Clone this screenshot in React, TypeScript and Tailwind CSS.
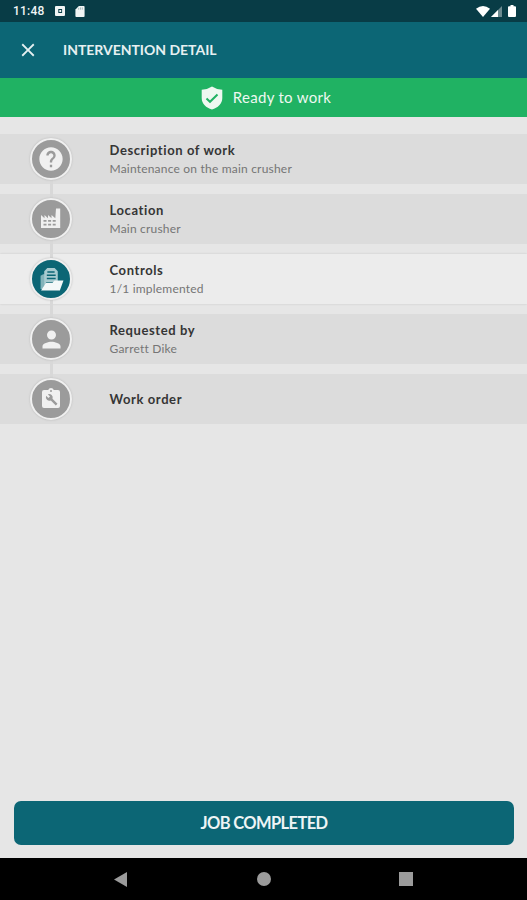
import type { ReactNode } from 'react'
import { MdClose, MdHelp, MdPerson } from 'react-icons/md'

interface Step {
  title: string
  detail?: string
  icon: ReactNode
  active?: boolean
}

function ShieldIcon() {
  return (
    <svg viewBox="0 0 22 24" className="h-6 w-[22px]">
      <path
        d="M11 .5Q15 3.300 21.300 3.800V12c0 6-4.500 9.800-10.300 11.500C5.200 21.800.7 18 .7 12V3.800Q7 3.300 11 .5z"
        fill="currentColor"
      />
      <path d="m5.500 12.500 3.500 3.300 7.500-7.300" fill="none" stroke="#20b263" strokeWidth="2" />
    </svg>
  )
}

function FactoryIcon() {
  return (
    <svg viewBox="0 0 22 22" className="mb-0.5 h-[22px] w-[22px]" fill="currentColor">
      <path
        fillRule="evenodd"
        d="M1 21V8l3.500 3.200V8L8 11.200V8l3.500 3.200V8l3.800 3.200L16 1.500h4.200V21zM3.500 13v1.800h3V13zm4.600 0v1.800h3V13zm4.600 0v1.800h3V13zM3.500 16.800v1.800h3v-1.800zm4.600 0v1.800h3v-1.800zm4.600 0v1.800h3v-1.800z"
      />
    </svg>
  )
}

function FolderIcon() {
  return (
    <svg viewBox="0 0 24 24" className="h-[25px] w-[25px] shrink-0">
      <path d="M1.500 21V8.500L4 7h2v8L3.500 21z" fill="#83b3ba" />
      <path d="M5 15V4l3-3h7l3 3v10.500H7L5 18z" fill="#a9cbd0" />
      <path d="M8 4.800h7M7.500 8h8.500M7.500 11h8.500" stroke="#0c6675" strokeWidth="1.500" />
      <path d="M6.500 15H13l2-2h8.500L20 22.500H2z" fill="#f4f8f8" />
    </svg>
  )
}

function WorkOrderIcon() {
  return (
    <svg viewBox="0 0 24 24" className="h-6 w-6 shrink-0">
      <path
        fill="currentColor"
        fillRule="evenodd"
        d="M5 3h4.200a3 3 0 0 1 5.600 0H19a2 2 0 0 1 2 2v14a2 2 0 0 1-2 2H5a2 2 0 0 1-2-2V5a2 2 0 0 1 2-2zm7 0a1 1 0 1 0 0 2 1 1 0 0 0 0-2z"
      />
      <path
        fill="#9b9b9b"
        d="m18.500 16.800-5-5a3.600 3.600 0 0 0-4.700-4.600l2.200 2.200-1.600 1.600-2.300-2.200a3.600 3.600 0 0 0 4.700 4.600l5 5z"
      />
    </svg>
  )
}

const steps: Step[] = [
  {
    title: 'Description of work',
    detail: 'Maintenance on the main crusher',
    icon: <MdHelp className="h-7 w-7" />,
  },
  { title: 'Location', detail: 'Main crusher', icon: <FactoryIcon /> },
  {
    title: 'Controls',
    detail: '1/1 implemented',
    icon: <FolderIcon />,
    active: true,
  },
  {
    title: 'Requested by',
    detail: 'Garrett Dike',
    icon: <MdPerson className="h-[27px] w-[27px]" />,
  },
  { title: 'Work order', icon: <WorkOrderIcon /> },
]

function StatusBar() {
  return (
    <div className="flex h-[22px] items-center bg-[#083c46] pl-[13px] pr-[11px] text-[#f1f5f5]">
      <span className="w-[42px] font-[Roboto,sans-serif] text-[12px] font-medium tracking-[0.2px]">
        11:48
      </span>
      <svg viewBox="0 0 10 10" className="h-2.5 w-2.5" fill="currentColor">
        <path
          fillRule="evenodd"
          d="M1 0h8a1 1 0 0 1 1 1v8a1 1 0 0 1-1 1H1a1 1 0 0 1-1-1V1a1 1 0 0 1 1-1zm2.300 3v4h3.800V3z"
        />
        <path d="M4.300 4h1.900v2H4.300z" />
      </svg>
      <svg viewBox="0 0 10 12" className="ml-[10px] h-[11px] w-2.5" fill="currentColor">
        <path d="M3.800 0H9a1 1 0 0 1 1 1v10a1 1 0 0 1-1 1H1a1 1 0 0 1-1-1V3.800z" />
        <path d="M3.500 2v2M5.500 1.500V4M7.500 1.500V4" stroke="#7d999e" strokeWidth=".7" />
      </svg>
      <svg viewBox="0 0 14 11" className="ml-auto h-[11px] w-3.5" fill="#fff">
        <path d="M0 2.800Q7-2.600 14 2.800L7 11z" />
      </svg>
      <svg viewBox="0 0 11 11" className="ml-[1px] h-[11px] w-[11px]">
        <path d="M0 11 11 0v11z" fill="#6b8a90" />
        <path d="M0 11 7 4v7z" fill="#fff" />
      </svg>
      <svg viewBox="0 0 8 12" className="ml-[6px] h-3 w-2" fill="#fff">
        <path d="M2.500 0h3v1.300H7a1 1 0 0 1 1 1V11a1 1 0 0 1-1 1H1a1 1 0 0 1-1-1V2.300a1 1 0 0 1 1-1h1.500z" />
      </svg>
    </div>
  )
}

function StepRow({ step, last }: { step: Step; last: boolean }) {
  return (
    <div
      className={`relative flex h-[50px] items-center pl-[30px] ${
        step.active
          ? 'bg-[#ececec] shadow-[0_0_2px_#c8c8c8]'
          : 'bg-[#dcdcdc]'
      }`}
    >
      {!last && (
        <div className="absolute left-[50px] top-[46px] z-10 h-[18px] w-[3px] bg-[#d8d8d8]" />
      )}
      <div
        className={`z-20 flex h-[42px] w-[42px] shrink-0 items-center justify-center rounded-full border-2 border-[#f0f0f0] text-[#f0f0f0] shadow-[0_0_2px_#b4b4b4] ${
          step.active ? 'bg-[#0c6675]' : 'bg-[#9b9b9b]'
        }`}
      >
        {step.icon}
      </div>
      <div className="ml-[37.500px]">
        <p
          className={`text-[13px] font-bold tracking-[0.6px] text-[#353535] ${
            step.detail ? 'pt-px leading-[19px]' : 'leading-[19px]'
          }`}
        >
          {step.title}
        </p>
        {step.detail && (
          <p className="text-[12px] leading-[18px] tracking-[0.2px] text-[#757575]">
            {step.detail}
          </p>
        )}
      </div>
    </div>
  )
}

export default function App() {
  return (
    <div className="flex h-[900px] w-[527px] flex-col overflow-hidden bg-[#e6e6e6] font-[Lato,sans-serif]">
      <StatusBar />
      <header className="flex h-14 items-center bg-[#0c6675] pl-[17px] text-[#e6f0f1]">
        <MdClose className="h-[22px] w-[22px]" />
        <h1 className="ml-6 pb-px text-[14px] font-bold tracking-[-0.02px]">
          INTERVENTION DETAIL
        </h1>
      </header>
      <div className="flex h-[39px] items-center justify-center gap-[10px] bg-[#20b263] pl-[5px] text-[#eef8f1]">
        <ShieldIcon />
        <span className="text-[15px] tracking-[0.3px]">Ready to work</span>
      </div>

      <main className="mt-[17px] flex flex-1 flex-col gap-[10px]">
        {steps.map((step, i) => (
          <StepRow key={step.title} step={step} last={i === steps.length - 1} />
        ))}
      </main>

      <div className="pb-[13px] pl-3.5 pr-[13px]">
        <button className="h-11 w-full rounded-[7px] bg-[#0c6675] text-[16.500px] font-bold tracking-[-0.620px] text-[#eef5f5]">
          JOB COMPLETED
        </button>
      </div>

      <nav className="flex h-[42px] items-center bg-black pl-[114px] text-[#9b9b9b]">
        <svg viewBox="0 0 13 15" className="h-[15px] w-[13px]" fill="currentColor">
          <path d="M13 0v15L0 7.500z" />
        </svg>
        <div className="ml-[130px] h-3.5 w-3.5 rounded-full bg-[#9b9b9b]" />
        <div className="ml-[128px] h-3.5 w-3.5 bg-[#9b9b9b]" />
      </nav>
    </div>
  )
}
